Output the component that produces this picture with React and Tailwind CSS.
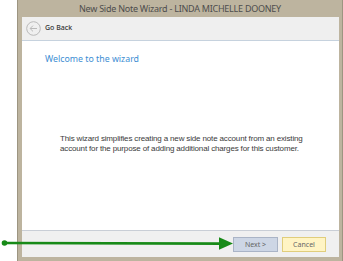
export default function App() {
  return (
    <div className="relative w-[343px] h-[261px] bg-white overflow-hidden" style={{ fontFamily: '"Noto Sans", sans-serif' }}>
      <div className="ml-[17px] w-[326px] h-[261px] flex flex-col bg-[#bdb49f] border-l border-r border-[#9d9581]">
        {/* title bar */}
        <div className="h-[17px] flex items-center justify-center text-[9px] tracking-[-0.25px] text-[#4d4d4d] leading-none">
          New Side Note Wizard - LINDA MICHELLE DOONEY
        </div>

        <div className="flex-1 flex flex-col ml-[4px] mr-[3px] mb-[4px] bg-white">
          {/* go back bar */}
          <div className="h-[24px] flex items-center gap-[4px] pl-[4px] bg-[#efefef] border-b border-[#c6d2de]">
            <svg width="15" height="15" viewBox="0 0 15 15" fill="none" stroke="#b9b9b9" strokeWidth="1">
              <circle cx="7.5" cy="7.5" r="6.8" />
              <path d="M11 7.5H4.2M7 4.6 4.1 7.5 7 10.4" />
            </svg>
            <span className="text-[7px] text-[#333] font-medium">Go Back</span>
          </div>

          {/* content */}
          <div className="flex-1 flex flex-col">
            <div className="pl-[23px] pt-[12px] text-[8.8px] text-[#3d8ed3]">Welcome to the wizard</div>
            <div
              className="pl-[38px] mt-[68px] text-[8px] leading-[10px] text-[#3a3a3a] tracking-[-0.15px]"
              style={{ fontFamily: '"Liberation Sans", Arial, sans-serif' }}
            >
              <p>This wizard simplifies creating a new side note account from an existing</p>
              <p>account for the purpose of adding additional charges for this customer.</p>
            </div>
          </div>

          {/* footer */}
          <div className="h-[27px] flex items-center justify-end gap-[4px] pr-[13px] bg-[#f0f0f0] border-t border-[#c9ced6]">
            <button className="w-[45px] h-[15px] bg-[#cdd6e5] border border-[#aab4c6] text-[7px] text-[#666] leading-none">
              Next &gt;
            </button>
            <button className="w-[44px] h-[15px] bg-[#fff4c4] border border-[#e0cd7c] text-[7px] text-[#666] leading-none">
              Cancel
            </button>
          </div>
        </div>
      </div>

      {/* green pointer arrow */}
      <svg className="absolute left-0 top-[236px]" width="240" height="16" viewBox="0 0 240 16">
        <circle cx="4.5" cy="7" r="2.8" fill="#178a17" />
        <line x1="4" y1="7" x2="222" y2="7.6" stroke="#178a17" strokeWidth="2.6" />
        <path d="M219 1.2 233 7.6 219 13.8Z" fill="#178a17" />
      </svg>
    </div>
  )
}
